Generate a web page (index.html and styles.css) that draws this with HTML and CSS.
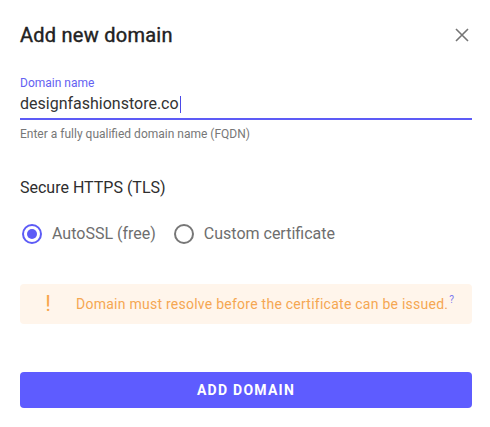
FILE: index.html
```html
<!DOCTYPE html>
<html lang="en">
<head>
<meta charset="utf-8">
<title>Add new domain</title>
<link rel="stylesheet" href="styles.css">
</head>
<body>
<div class="dialog">
  <div class="header">
    <h1 class="title">Add new domain</h1>
    <button class="close" aria-label="Close">
      <svg width="14" height="14" viewBox="0 0 14 14"><path d="M1 1 L13 13 M13 1 L1 13" stroke="#757575" stroke-width="1.6" fill="none"/></svg>
    </button>
  </div>

  <div class="field">
    <div class="field-label">Domain name</div>
    <div class="field-input"><span class="value">designfashionstore.co</span><span class="caret"></span></div>
    <div class="field-help">Enter a fully qualified domain name (FQDN)</div>
  </div>

  <div class="section-title">Secure HTTPS (TLS)</div>

  <div class="radios">
    <label class="radio">
      <span class="radio-circle checked"><span class="radio-dot"></span></span>
      <span class="radio-label">AutoSSL (free)</span>
    </label>
    <label class="radio">
      <span class="radio-circle"></span>
      <span class="radio-label">Custom certificate</span>
    </label>
  </div>

  <div class="warning">
    <span class="warning-icon">!</span>
    <span class="warning-text">Domain must resolve before the certificate can be issued.<sup class="help">?</sup></span>
  </div>

  <button class="primary">ADD DOMAIN</button>
</div>
</body>
</html>
```

FILE: styles.css
```css
html, body {
  margin: 0;
  padding: 0;
  background: #ffffff;
}

body {
  font-family: Roboto, "Noto Sans", "Liberation Sans", sans-serif;
  color: #333333;
}

.dialog {
  padding: 23px 18px 0 20px;
}

.header {
  display: flex;
  align-items: center;
  justify-content: space-between;
}

.title {
  margin: 0;
  font-family: Roboto, "Noto Sans", sans-serif;
  font-size: 20px;
  line-height: 24px;
  font-weight: 400;
  letter-spacing: 0.25px;
  -webkit-text-stroke: 0.4px #222222;
  color: #222222;
}

.close {
  width: 24px;
  height: 24px;
  padding: 0;
  margin-right: -2px;
  border: 0;
  background: transparent;
  display: flex;
  align-items: center;
  justify-content: center;
}

.field {
  margin-top: 28px;
}

.field-label {
  font-size: 12px;
  line-height: 16px;
  color: #6461f2;
  margin-bottom: 3px;
}

.field-input {
  font-size: 16px;
  line-height: 20px;
  color: #333333;
  padding-bottom: 4px;
  border-bottom: 2px solid #5d5bf6;
  display: flex;
  align-items: center;
}

.caret {
  display: inline-block;
  width: 1px;
  height: 17px;
  background: #4b49e8;
  margin-left: 1px;
}

.field-help {
  margin-top: 6px;
  font-size: 12px;
  line-height: 16px;
  color: #777777;
}

.section-title {
  margin-top: 36px;
  font-size: 16px;
  line-height: 20px;
  color: #2e2e2e;
}

.radios {
  margin-top: 26px;
  display: flex;
  align-items: center;
  gap: 18px;
  padding-left: 2px;
}

.radio {
  display: flex;
  align-items: center;
  gap: 10px;
}

.radio-circle {
  box-sizing: border-box;
  width: 20px;
  height: 20px;
  border: 2px solid #777777;
  border-radius: 50%;
  display: flex;
  align-items: center;
  justify-content: center;
}

.radio-circle.checked {
  border-color: #5d5bf6;
}

.radio-dot {
  width: 10px;
  height: 10px;
  border-radius: 50%;
  background: #5d5bf6;
}

.radio-label {
  font-size: 16px;
  line-height: 20px;
  color: #6e6e6e;
}

.warning {
  margin-top: 40px;
  height: 40px;
  box-sizing: border-box;
  padding-left: 16px;
  background: #fff5eb;
  border-radius: 4px;
  display: flex;
  align-items: center;
}

.warning-icon {
  width: 24px;
  text-align: center;
  font-size: 22px;
  line-height: 24px;
  font-weight: 400;
  color: #f8a64c;
  margin-right: 16px;
}

.warning-text {
  font-size: 14px;
  line-height: 20px;
  letter-spacing: 0.25px;
  color: #f5a752;
}

.help {
  font-size: 10px;
  line-height: 0;
  vertical-align: 6px;
  margin-left: 1px;
  color: #7b78f0;
}

.primary {
  display: block;
  width: 100%;
  margin-top: 48px;
  height: 36px;
  border: 0;
  border-radius: 4px;
  background: #5e5cff;
  color: #ffffff;
  font-family: Roboto, "Noto Sans", "Liberation Sans", sans-serif;
  font-size: 14px;
  font-weight: 700;
  letter-spacing: 1.25px;
  padding: 0;
}
```
